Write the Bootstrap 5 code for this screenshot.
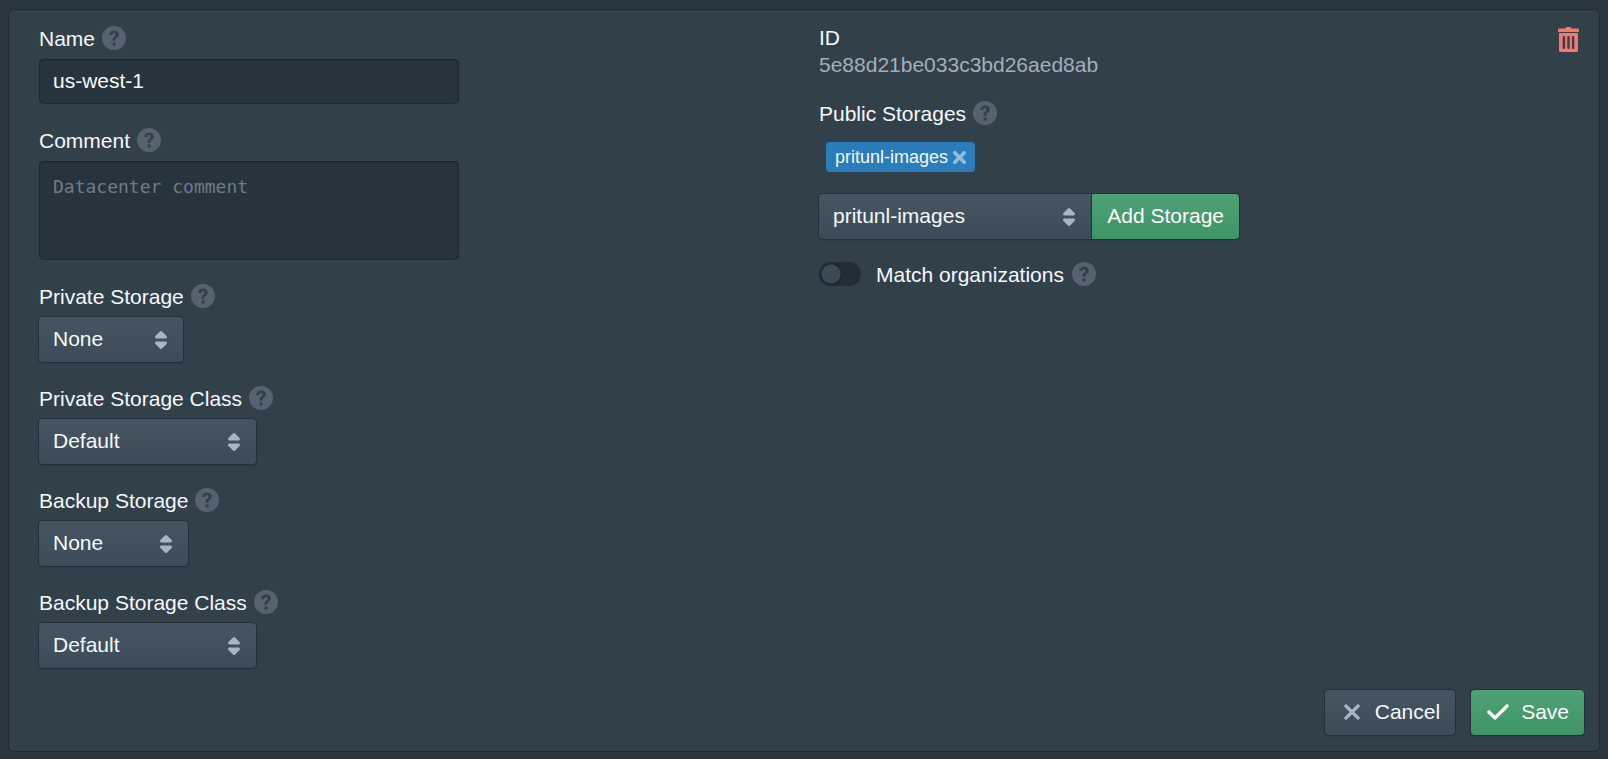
<!DOCTYPE html>
<html lang="en">
<head>
<meta charset="utf-8">
<meta name="viewport" content="width=device-width, initial-scale=1">
<title>Datacenter</title>
<link href="https://cdn.jsdelivr.net/npm/bootstrap@5.3.0/dist/css/bootstrap.min.css" rel="stylesheet">
<style>
  body { background: #2b3841; color: #f5f8fa; font-family: "Liberation Sans", Arial, sans-serif; font-size: 21px; line-height: 27px; }
  .dc-panel { background: #32404a; border: 0; border-radius: 5px; color: inherit; margin: 10px 9px 8px; padding: 14px 15px 16px;
    box-shadow: 0 0 0 1px #212b33, 0 0 2px 1px rgba(16,22,26,.2); }
  .dc-row { --bs-gutter-x: 30px; margin: 0; }
  .dc-field { max-width: 420px; margin-bottom: 22px; }
  .dc-label { display: flex; align-items: center; gap: 7px; height: 28px; margin-bottom: 7px; }
  .dc-help { width: 24px; height: 24px; fill: #56636e; flex: none; }
  .dc-box, .dc-box:focus { background: #28343d; color: #f5f8fa; border: 0; border-radius: 5px; font-size: 21px; line-height: 27px; padding: 8px 14px 10px;
    box-shadow: inset 0 0 0 1px rgba(16,22,26,.35), inset 0 1px 1px rgba(16,22,26,.4); }
  .dc-box { height: 45px; }
  textarea.dc-box { display: block; height: 99px; resize: none; padding-top: 15px; font-family: "DejaVu Sans Mono", monospace; font-size: 18px; line-height: 21px; }
  .dc-box::placeholder { color: #6f7c85; opacity: 1; }
  .dc-face, .dc-face:hover { color: #f5f8fa; border: 0; border-radius: 4px; font-size: 21px; line-height: 27px; height: 45px; padding: 8px 15px 10px;
    box-shadow: 0 0 0 1px #25303a, 0 1px 2px rgba(16,22,26,.3); background: linear-gradient(#465560, #3c4b58); }
  select.dc-face { width: auto; padding-left: 14px; background: url("data:image/svg+xml,%3Csvg xmlns='http://www.w3.org/2000/svg' viewBox='0 0 16 16' fill='%23a7b6c2'%3E%3Cpath d='M5 7h6a1 1 0 0 0 .71-1.71l-3-3a1 1 0 0 0-1.42 0l-3 3A1 1 0 0 0 5 7zm6 2H5a1 1 0 0 0-.71 1.71l3 3a1 1 0 0 0 1.42 0l3-3A1 1 0 0 0 11 9z'/%3E%3C/svg%3E") right 10px center / 24px 24px no-repeat, linear-gradient(#465560, #3c4b58); }
  .dc-w-sm { min-width: 144px; }
  .dc-w-md { min-width: 149px; }
  .dc-w-lg { min-width: 217px; }
  .dc-go, .dc-go:hover { background: linear-gradient(#50a176, #3d9565); color: #fff; }
  .dc-action { display: inline-flex; align-items: center; gap: 11px; }
  .dc-action svg { width: 24px; height: 24px; fill: #a7b6c2; stroke: #a7b6c2; stroke-width: .4px; }
  .dc-go svg { fill: #fff; stroke: #fff; }
  .dc-id { color: #a2afba; }
  .dc-public { margin-top: 21px; }
  .dc-chips { margin-top: 15px; }
  .dc-chip { display: inline-flex; align-items: center; height: 30px; margin-left: 7px; padding: 0 6px 0 9px; border-radius: 4px; background: #2a7cba; color: #f5f8fa; font-size: 18px; }
  .dc-chip button { display: flex; margin-left: 2px; padding: 0; border: 0; background: none; }
  .dc-chip svg { width: 19px; height: 19px; fill: #94bedd; stroke: #94bedd; stroke-width: 1px; }
  .dc-group { max-width: 420px; margin: 22px 0 23px; flex-wrap: nowrap; }
  .dc-group select { flex: 1 1 auto; border-radius: 4px 0 0 4px; }
  .dc-group .btn { border-radius: 0 4px 4px 0; flex: none; margin-left: 1px !important; }
  .dc-toggle { padding: 0; min-height: 0; margin: 0; height: 24px; }
  .dc-toggle .form-check-input, .dc-toggle .form-check-input:focus { float: none; flex: none; width: 42px; height: 24px; margin: 0 15px 0 0; border: 0; border-radius: 12px; background-color: #222d35; box-shadow: none;
    background-image: radial-gradient(circle at 12px 12px, #3c4a57 9px, #1c262e 10px, transparent 12px); background-size: 100% 100%; background-position: left center; }
  .dc-delete { margin: 3px -10px 0 0; }
  .dc-trash { width: 21px; height: 25px; display: block; fill: #f5776f; }
</style>
</head>
<body>
<svg class="d-none" aria-hidden="true">
  <symbol id="help" viewBox="0 0 16 16"><path fill-rule="evenodd" d="M8 0a8 8 0 1 0 0 16A8 8 0 0 0 8 0zM7 11h2.100v2H7zM4.800 6C4.900 4.100 6.100 3 8.050 3c1.850 0 3.100 1 3.100 2.600 0 .95-.4 1.600-1.300 2.250-.75.55-.85.8-.85 1.650v.4H7v-.6c0-1.150.3-1.700 1.150-2.300.65-.45.85-.75.85-1.250 0-.65-.35-1.050-1-1.050-.75 0-1.150.45-1.150 1.300z"/></symbol>
  <symbol id="cross" viewBox="0 0 16 16"><path d="M9.410 8l3.290-3.290c.19-.18.3-.43.3-.71a1.003 1.003 0 0 0-1.710-.71L8 6.590l-3.290-3.300a1.003 1.003 0 0 0-1.420 1.420L6.590 8 3.300 11.290c-.19.18-.3.43-.3.71a1.003 1.003 0 0 0 1.710.71L8 9.410l3.290 3.290c.18.19.43.3.71.3a1.003 1.003 0 0 0 .71-1.710L9.410 8z"/></symbol>
  <symbol id="tick" viewBox="0 0 16 16"><path d="M14 3c-.28 0-.53.11-.71.29L6 10.590l-3.290-3.300a1.003 1.003 0 0 0-1.420 1.420l4 4c.18.18.43.29.71.29s.53-.11.71-.29l8-8A1.003 1.003 0 0 0 14 3z"/></symbol>
</svg>

<form class="card dc-panel" onsubmit="return false">
  <div class="row dc-row">
    <div class="col-6">
      <div class="dc-field">
        <div class="dc-label"><label for="name">Name</label><svg class="dc-help"><use href="#help"/></svg></div>
        <input id="name" class="form-control dc-box" type="text" value="us-west-1">
      </div>
      <div class="dc-field">
        <div class="dc-label"><label for="comment">Comment</label><svg class="dc-help"><use href="#help"/></svg></div>
        <textarea id="comment" class="form-control dc-box" placeholder="Datacenter comment"></textarea>
      </div>
      <div class="dc-field">
        <div class="dc-label"><label for="private">Private Storage</label><svg class="dc-help"><use href="#help"/></svg></div>
        <select id="private" class="form-select dc-face dc-w-sm"><option>None</option></select>
      </div>
      <div class="dc-field">
        <div class="dc-label"><label for="private-class">Private Storage Class</label><svg class="dc-help"><use href="#help"/></svg></div>
        <select id="private-class" class="form-select dc-face dc-w-lg"><option>Default</option></select>
      </div>
      <div class="dc-field">
        <div class="dc-label"><label for="backup">Backup Storage</label><svg class="dc-help"><use href="#help"/></svg></div>
        <select id="backup" class="form-select dc-face dc-w-md"><option>None</option></select>
      </div>
      <div class="dc-field">
        <div class="dc-label"><label for="backup-class">Backup Storage Class</label><svg class="dc-help"><use href="#help"/></svg></div>
        <select id="backup-class" class="form-select dc-face dc-w-lg"><option>Default</option></select>
      </div>
    </div>

    <div class="col-6">
      <div class="d-flex justify-content-between align-items-start">
        <div>
          <div>ID</div>
          <div class="dc-id">5e88d21be033c3bd26aed8ab</div>
        </div>
        <button class="btn p-0 border-0 dc-delete" type="button" aria-label="Delete">
          <svg class="dc-trash" viewBox="0 0 21 25"><path fill-rule="evenodd" d="M7.500 1.500Q7.500 0 9 0h3q1.500 0 1.500 1.500H20q1 0 1 1V5H0V2.500q0-1 1-1zM1 6h19v17.500q0 1.500-1.500 1.500h-16Q1 25 1 23.500zM4.700 10v11q0 1 1.200 1t1.200-1V10q0-1-1.200-1t-1.200 1zM9.300 10v11q0 1 1.200 1t1.200-1V10q0-1-1.200-1t-1.200 1zM13.900 10v11q0 1 1.200 1t1.200-1V10q0-1-1.200-1t-1.200 1z"/></svg>
        </button>
      </div>
      <div class="dc-label dc-public"><label for="storage">Public Storages</label><svg class="dc-help"><use href="#help"/></svg></div>
      <div class="d-flex dc-chips">
        <span class="dc-chip">pritunl-images<button type="button" aria-label="Remove"><svg><use href="#cross"/></svg></button></span>
      </div>
      <div class="input-group dc-group">
        <select id="storage" class="form-select dc-face"><option>pritunl-images</option></select>
        <button class="btn dc-face dc-go" type="button">Add Storage</button>
      </div>
      <div class="form-check form-switch dc-toggle d-flex align-items-center">
        <input id="match" class="form-check-input" type="checkbox" role="switch">
        <label class="me-2" for="match">Match organizations</label><svg class="dc-help"><use href="#help"/></svg>
      </div>
    </div>
  </div>

  <div class="d-flex justify-content-end">
    <button class="btn dc-face dc-action me-3" type="button"><svg><use href="#cross"/></svg>Cancel</button>
    <button class="btn dc-face dc-go dc-action" type="submit"><svg><use href="#tick"/></svg>Save</button>
  </div>
</form>
<script src="https://cdn.jsdelivr.net/npm/bootstrap@5.3.0/dist/js/bootstrap.bundle.min.js"></script>
</body>
</html>
